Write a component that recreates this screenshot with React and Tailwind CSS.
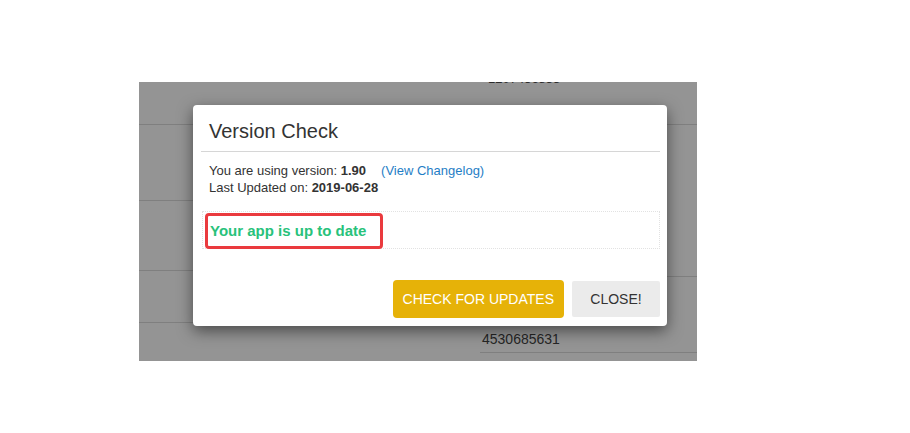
export default function App() {
  return (
    <div className="w-[910px] h-[433px] bg-white overflow-hidden" style={{ fontFamily: '"Liberation Sans", Arial, sans-serif' }}>
      <div className="ml-[139px] mt-[82px] w-[558px] h-[279px] relative overflow-hidden bg-[#949494]">
        {/* background table (under backdrop) */}
        <div className="flex h-full">
          <div className="w-[341px] flex flex-col">
            <div className="h-[43px] border-b border-[#7f7f7f]"></div>
            <div className="h-[76px] border-b border-[#7f7f7f]"></div>
            <div className="h-[70px] border-b border-[#7f7f7f]"></div>
            <div className="h-[52px] border-b border-[#7f7f7f]"></div>
          </div>
          <div className="flex-1 flex flex-col">
            <div className="h-[43px] border-b border-[#7f7f7f] pl-[8px]">
              <div className="mt-[-11px] text-[13px] leading-[15px] text-[#2b2b2b]">1207456835</div>
            </div>
            <div className="h-[152px] border-b border-[#7f7f7f]"></div>
            <div className="h-[76px] border-b border-[#7f7f7f] flex items-end pl-[2px] pb-[5px]">
              <span className="text-[14px] leading-[16px] text-[#262626]">4530685631</span>
            </div>
          </div>
        </div>

        {/* modal */}
        <div className="absolute left-[54px] top-[23px] w-[474px] h-[221px] bg-white rounded-[4px] shadow-[0_5px_15px_rgba(0,0,0,0.5)] flex flex-col">
          <div className="pl-4 pt-[14px] text-[20px] leading-[24px] text-[#333]">Version Check</div>
          <div className="mt-[8px] ml-2 mr-[7px] h-px bg-[#d6d6d6]"></div>
          <div className="mt-[10px] pl-4 text-[13px] leading-[17px] text-[#333]">
            <div>
              You are using version: <b>1.90</b>
              <span className="ml-[15px] text-[#1f7ec6]">(View Changelog)</span>
            </div>
            <div>
              Last Updated on: <b>2019-06-28</b>
            </div>
          </div>
          <div className="mt-[15px] ml-[9px] mr-[7px] h-[38px] border border-dotted border-[#e2e2e2]">
            <div className="ml-[2px] mt-[1px] w-[178px] h-[36px] border-[3px] border-[#ea3a3e] rounded-[4px] pl-[2px] pt-[3px]">
              <span className="text-[15px] leading-[18px] font-bold text-[#28c27b]">Your app is up to date</span>
            </div>
          </div>
          <div className="mt-[31px] pr-[7px] flex justify-end items-center gap-2">
            <div className="h-[38px] px-[10px] flex items-center bg-[#e6b208] rounded-[4px] text-white text-[14px]">CHECK FOR UPDATES</div>
            <div className="h-[36px] w-[88px] flex items-center justify-center bg-[#ebebeb] rounded-[2px] text-[#333] text-[14px]">CLOSE!</div>
          </div>
        </div>
      </div>
    </div>
  );
}
